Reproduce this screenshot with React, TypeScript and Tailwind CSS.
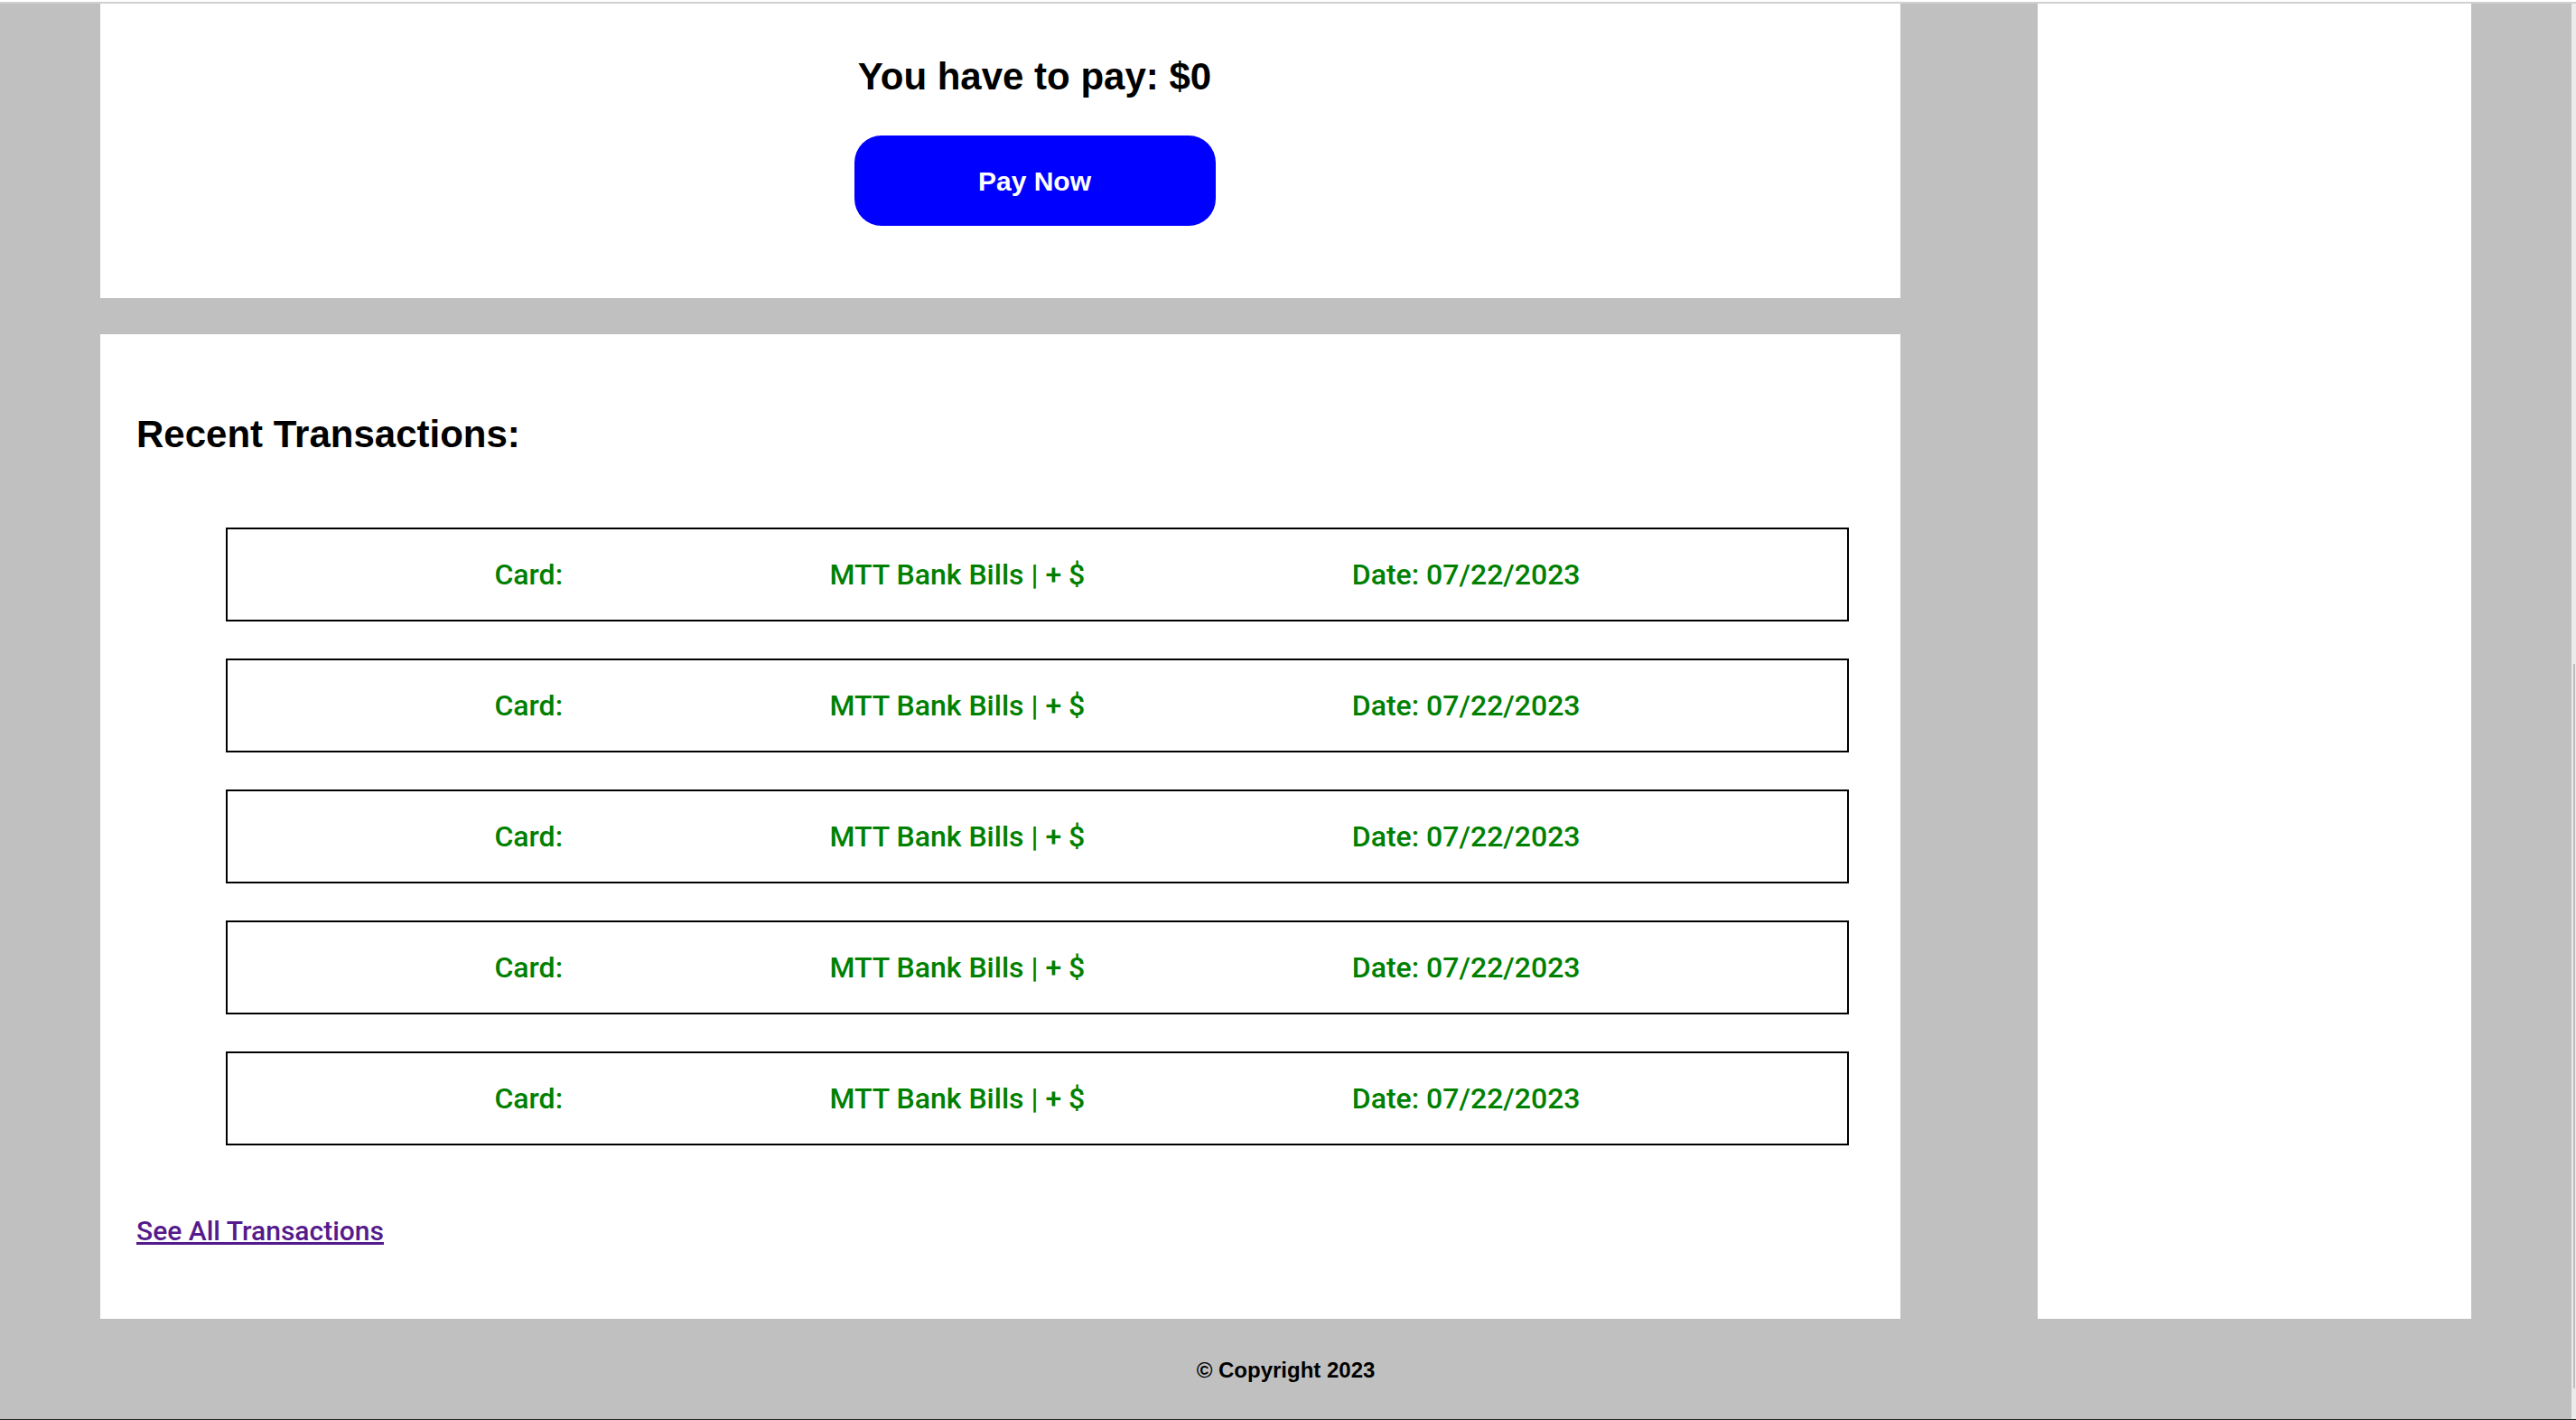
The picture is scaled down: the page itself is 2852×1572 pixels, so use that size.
const rows = Array.from({ length: 5 }, (_, i) => ({
  id: i,
  card: "Card:",
  desc: "MTT Bank Bills | + $",
  date: "Date: 07/22/2023",
}));

export default function App() {
  return (
    <div className="w-[2852px] h-[1572px] flex flex-col bg-[#c0c0c0] font-['Liberation_Sans',Arial,sans-serif] overflow-hidden">
      <div className="h-[2px] bg-white" />
      <div className="h-[2px] bg-[#d0d0d0]" />

      <div className="flex flex-1">
        <div className="flex-1 flex flex-col">
          <div className="flex gap-[152px] px-[111px]">
            {/* main column */}
            <div className="w-[1993px] flex flex-col">
              <section className="h-[326px] bg-white pt-[60px] pl-[76px] flex flex-col items-center">
                <h1 className="text-[42px] leading-none font-bold text-black">You have to pay: $0</h1>
                <button className="mt-[44px] w-[400px] h-[100px] rounded-[30px] bg-[#0000ff] text-white text-[30px] font-bold">
                  Pay Now
                </button>
              </section>

              <section className="mt-[40px] h-[1090px] bg-white pt-[90px] pl-[40px]">
                <h2 className="text-[42px] leading-none font-bold text-black">Recent Transactions:</h2>
                <ul className="mt-[82px] ml-[99px] w-[1797px] flex flex-col gap-[41px]">
                  {rows.map((r) => (
                    <li
                      key={r.id}
                      className="h-[104px] border-2 border-black flex items-center justify-evenly font-['Roboto',sans-serif] text-[32px] font-medium text-[#008000]"
                    >
                      <span>{r.card}</span>
                      <span>{r.desc}</span>
                      <span>{r.date}</span>
                    </li>
                  ))}
                </ul>
                <a
                  href="#"
                  className="block mt-[80px] w-fit font-['Roboto',sans-serif] text-[30px] leading-none font-medium text-[#551a8b] underline"
                >
                  See All Transactions
                </a>
              </section>
            </div>

            {/* sidebar */}
            <aside className="w-[480px] h-[1456px] bg-white" />
          </div>

          <footer className="pt-[45px] text-center text-[24px] leading-none font-bold text-black">
            © Copyright 2023
          </footer>
        </div>

        {/* scrollbar */}
        <div className="w-[5px] bg-[#ebebeb] pt-[731px]">
          <div className="ml-[2px] w-[2px] h-[802px] bg-[#bdbdbd]" />
        </div>
      </div>

      <div className="h-[1px] bg-[#222]" />
    </div>
  );
}
